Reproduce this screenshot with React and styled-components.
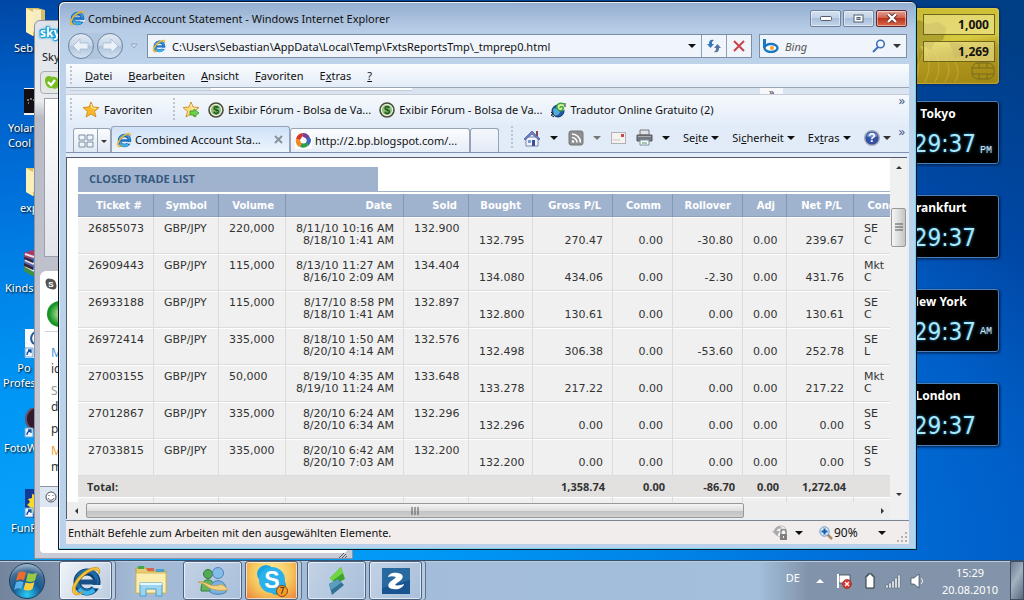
import React from "react";
import styled, { createGlobalStyle } from "styled-components";

const trades = [
    ["26855073", "220,000", "8/11/10 10:16 AM", "8/18/10 1:41 AM", "132.900", "132.795", "270.47", "0.00", "-30.80", "0.00", "239.67", "SE", "C"],
    ["26909443", "115,000", "8/13/10 11:27 AM", "8/16/10 2:09 AM", "134.404", "134.080", "434.06", "0.00", "-2.30", "0.00", "431.76", "Mkt", "C"],
    ["26933188", "115,000", "8/17/10 8:58 PM", "8/18/10 1:41 AM", "132.897", "132.800", "130.61", "0.00", "0.00", "0.00", "130.61", "SE", "C"],
    ["26972414", "335,000", "8/18/10 1:50 AM", "8/20/10 4:14 AM", "132.576", "132.498", "306.38", "0.00", "-53.60", "0.00", "252.78", "SE", "L"],
    ["27003155", "50,000", "8/19/10 4:35 AM", "8/19/10 11:24 AM", "133.648", "133.278", "217.22", "0.00", "0.00", "0.00", "217.22", "Mkt", "C"],
    ["27012867", "335,000", "8/20/10 6:24 AM", "8/20/10 6:34 AM", "132.296", "132.296", "0.00", "0.00", "0.00", "0.00", "0.00", "SE", "S"],
    ["27033815", "335,000", "8/20/10 6:42 AM", "8/20/10 7:03 AM", "132.200", "132.200", "0.00", "0.00", "0.00", "0.00", "0.00", "SE", "S"],
];

const columns = [
    ["Ticket #", 76],
    ["Symbol", 65],
    ["Volume", 67],
    ["Date", 118],
    ["Sold", 65],
    ["Bought", 64],
    ["Gross P/L", 80],
    ["Comm", 60],
    ["Rollover", 70],
    ["Adj", 44],
    ["Net P/L", 67],
    ["Cond", 54],
];

const clocks = [
    { city: "Tokyo", top: 101, half: "PM", low: true },
    { city: "Frankfurt", top: 195 },
    { city: "New York", top: 289, half: "AM" },
    { city: "London", top: 383 },
];

const shortcuts = [
    { x: 14, y: 8, kind: "folder", label: ["Seb"] },
    { x: 8, y: 88, kind: "photo", label: ["Yolan", "Cool"] },
    { x: 20, y: 168, kind: "folder", label: ["exp"] },
    { x: 5, y: 248, kind: "rar", label: ["Kinds"] },
    { x: 3, y: 328, kind: "paper", label: ["     Po", "Profes"] },
    { x: 4, y: 408, kind: "lens", label: ["FotoW"] },
    { x: 11, y: 488, kind: "sun", label: ["FunP"] },
];

/* ---------- icons ---------- */

function IeIcon({ size = 16, dark }) {
    return (
        <svg width={size} height={size} viewBox="0 0 32 32">
            <circle cx="17" cy="17" r="10" fill="none" stroke={dark ? "#0d3d6e" : "#0f55a8"} strokeWidth="7" />
            <circle cx="17" cy="16" r="10" fill="none" stroke={dark ? "#1c6aa6" : "#3a9be0"} strokeWidth="4" />
            <path d="M9 24a10 10 0 0 0 15 1" fill="none" stroke="#35b5ee" strokeWidth="4" />
            <path d="M10 17h17" stroke={dark ? "#174f86" : "#1c6fc4"} strokeWidth="5" />
            <path d="M20 20h12v4l-8-1z" fill="#dce8f4" />
            <path d="M4 29C-2 24 9 7 22 3c7-2 9 1 7 6 0-4-3-5-8-3C11 11 3 22 6 27c1 2 5 1 8-1-4 4-8 5-10 3z" fill="#f6c537" stroke="#c98d13" strokeWidth=".7" />
        </svg>
    );
}

function Arrow({ dir = "down", color = "#111" }) {
    const paths = {
        down: "M0 2h8L4 6z",
        up: "M0 6h8L4 2z",
    };
    return (
        <svg width="8" height="8" viewBox="0 0 8 8">
            <path d={paths[dir]} fill={color} />
        </svg>
    );
}

function SmallArrow({ dir }) {
    const paths = {
        down: "M1 3h6L4 6z",
        up: "M1 6h6L4 3z",
        left: "M6 1v6L3 4z",
        right: "M3 1v6l3-3z",
    };
    return (
        <svg width="8" height="8" viewBox="0 0 8 8">
            <path d={paths[dir]} fill="#333" />
        </svg>
    );
}

function NavArrow({ flip }) {
    return (
        <svg width="18" height="16" viewBox="0 0 18 16">
            <path
                d={flip ? "M17 8 10 1v4H2v6h8v4z" : "M1 8l7-7v4h8v6H8v4z"}
                fill="#eaf1f9" stroke="#a9bdd4" strokeWidth=".8"
            />
        </svg>
    );
}

function StarIcon({ add }) {
    return (
        <svg width="17" height="17" viewBox="0 0 17 17">
            <path d="M8 1l2 5 6 .5-4.500 4 1.500 5.500-5-3-5 3 1.500-5.500L0 6.500 6 6z" fill={add ? "#f9dc7c" : "#fbb829"} stroke="#c87f13" strokeWidth=".8" />
            <path d="M8 3l1 4 4 .5" fill="none" stroke="#fff2b0" />
            {add && <path d="M7 10h4V8l5 4-5 4v-2H7z" fill="#6fd04f" stroke="#2f9a26" strokeWidth=".8" />}
        </svg>
    );
}

function DollarIcon() {
    return (
        <svg width="16" height="16" viewBox="0 0 16 16">
            <circle cx="8" cy="8" r="7" fill="#eaf2da" stroke="#4b4a3c" strokeWidth="1.600" />
            <circle cx="8" cy="8" r="5" fill="#8fc077" />
            <text x="8" y="12" textAnchor="middle" fontSize="11" fontWeight="bold" fontFamily="Liberation Sans, sans-serif" fill="#175a1c">$</text>
        </svg>
    );
}

function GlobeIcon() {
    return (
        <svg width="16" height="16" viewBox="0 0 16 16">
            <circle cx="8" cy="9" r="6" fill="#1c5ea8" stroke="#12335e" />
            <path d="M3 7c3-2 4 0 7 3-1 3-4 4-6 3z" fill="#57a9dc" />
            <circle cx="11" cy="5" r="4" fill="#d9f0a8" />
            <path d="M14 2c-5-2-8 1-7 4s5 4 6 1-3-3-3-1" fill="none" stroke="#35a839" strokeWidth="1.500" />
            <path d="M1 10l2 2-2 1 3 2M15 1v4" stroke="#222" fill="none" />
        </svg>
    );
}

function PicasaIcon() {
    return (
        <svg width="17" height="17" viewBox="0 0 17 17">
            <rect width="17" height="17" fill="#fff" />
            <path d="M8 1a7.500 7.500 0 0 1 7 5l-3 2-5-4z" fill="#7b3f98" />
            <path d="M8 1 7 5 5 8 1 7a8 8 0 0 1 7-6z" fill="#d8352a" />
            <path d="M16 7a8 8 0 0 1-3 7l-2-5 2-4z" fill="#3d69c0" />
            <path d="M13 14a8 8 0 0 1-8 1l1-4 6-1z" fill="#2c9d49" />
            <path d="M4 15A8 8 0 0 1 1 7l4 1 2 4z" fill="#ef8b20" />
            <circle cx="8.500" cy="8.500" r="3" fill="#fff" />
        </svg>
    );
}

function HomeIcon() {
    return (
        <svg width="18" height="18" viewBox="0 0 18 18">
            <path d="M13 2h2v5h-2z" fill="#8b4b42" />
            <path d="M3 8h12v9H3z" fill="#f3f4fa" stroke="#7882b4" />
            <path d="M1 10l8-8 8 8-1 1-7-6-7 6z" fill="#6f80c8" stroke="#46549b" strokeWidth=".7" />
            <path d="M9 11h3v6H9z" fill="#3e4f9a" />
            <path d="M5 11h3v3H5z" fill="#7a98d8" />
        </svg>
    );
}

function FeedIcon() {
    return (
        <svg width="16" height="16" viewBox="0 0 16 16">
            <rect x="1" y="1" width="14" height="14" rx="2" fill="#8e8e8e" stroke="#777" />
            <circle cx="5" cy="11.500" r="1.300" fill="#fff" />
            <path d="M4 7.500a5 5 0 0 1 5 5M4 4a8.500 8.500 0 0 1 8.500 8.500" fill="none" stroke="#fff" strokeWidth="1.600" />
        </svg>
    );
}

function MailIcon() {
    return (
        <svg width="15" height="12" viewBox="0 0 15 12">
            <rect x=".5" y=".5" width="14" height="11" fill="#f5f3f2" stroke="#b4b0b0" />
            <path d="M2 8h7" stroke="#c9c5c5" />
            <path d="M10 2h3v3h-3z" fill="#c9474d" />
        </svg>
    );
}

function PrinterIcon() {
    return (
        <svg width="17" height="17" viewBox="0 0 17 17">
            <path d="M4 1h9v5H4z" fill="#dfe3e8" stroke="#777" />
            <path d="M1 6h15v6H1z" fill="#74787e" stroke="#56595e" />
            <path d="M2 7h13v1H2z" fill="#a9adb2" />
            <path d="M4 11h9v5H4z" fill="#f8fbff" stroke="#7790a4" />
            <path d="M6 14h5" stroke="#49a04c" />
        </svg>
    );
}

function HelpIcon() {
    return (
        <svg width="16" height="16" viewBox="0 0 16 16">
            <circle cx="8" cy="8" r="7.300" fill="#3450a4" stroke="#a3a9b5" strokeWidth="1.400" />
            <path d="M2.500 6a6 6 0 0 1 11 0c-3 2-8 2-11 0z" fill="#6f8ed6" />
            <text x="8" y="12" textAnchor="middle" fontSize="12" fontWeight="bold" fontFamily="Liberation Sans, sans-serif" fill="#fff">?</text>
        </svg>
    );
}

function RefreshIcon() {
    return (
        <svg width="16" height="16" viewBox="0 0 16 16">
            <path d="M1 6l3.500 4L8 6H6V4l2-2C4 1 3 3 3 6z" fill="#3577b8" />
            <path d="M15 10l-3.500-4L8 10h2v2l-2 2c4 1 5-1 5-4z" fill="#55779e" />
        </svg>
    );
}

function StopIcon() {
    return (
        <svg width="12" height="12" viewBox="0 0 12 12">
            <path d="M1 1l10 10M11 1L1 11" stroke="#c9414a" strokeWidth="2" />
        </svg>
    );
}

function BingIcon() {
    return (
        <svg width="16" height="14" viewBox="0 0 16 14">
            <path d="M1.500 0v9" stroke="#1b77bf" strokeWidth="3" />
            <ellipse cx="8" cy="9" rx="6.500" ry="4" fill="#fff" stroke="#1b77bf" strokeWidth="2.400" />
            <circle cx="9" cy="9" r="2" fill="#f6a11c" />
        </svg>
    );
}

function SearchIcon() {
    return (
        <svg width="14" height="14" viewBox="0 0 14 14">
            <circle cx="8.500" cy="5" r="3.800" fill="#f3f9ff" stroke="#3b72b5" strokeWidth="1.600" />
            <path d="M6 8l-5 5" stroke="#3b72b5" strokeWidth="2" />
        </svg>
    );
}

function ZoomIcon() {
    return (
        <svg width="14" height="14" viewBox="0 0 14 14">
            <path d="M8 8l5 5" stroke="#a78764" strokeWidth="2.500" />
            <circle cx="5.500" cy="5.500" r="4.700" fill="#d8eafb" stroke="#6b94bd" />
            <path d="M5.500 2.500v6M2.500 5.500h6" stroke="#185ea9" strokeWidth="2" />
        </svg>
    );
}

function PrivacyIcon() {
    return (
        <svg width="17" height="15" viewBox="0 0 17 15">
            <circle cx="9" cy="6.500" r="5.500" fill="#f4f4f4" stroke="#bbb" />
            <path d="M9 2v5" stroke="#999" />
            <path d="M3 7a6 6 0 0 1 5-5" fill="none" stroke="#aaa" strokeWidth="2.500" />
            <path d="M0 6l5 5 3-5z" fill="#aaa" />
            <path d="M9 9V7a2.500 2.500 0 0 1 5 0v2" fill="none" stroke="#888" strokeWidth="1.300" />
            <path d="M8 9h7v6H8z" fill="#7f7f7f" />
            <path d="M11 11h1v2h-1z" fill="#eee" />
        </svg>
    );
}

function ShortcutIcon({ kind }) {
    return (
        <svg width="28" height="32" viewBox="0 0 28 32">
            {kind === "folder" && (
                <>
                    <path d="M2 0l8-1 11 3v20L9 28 2 24z" fill="#d9bd66" />
                    <path d="M9 1l8 1v18l-8 4z" fill="#f5ecc4" />
                    <path d="M2 0l7 4v24l-7-4z" fill="#fbf0b5" />
                </>
            )}
            {kind === "photo" && (
                <>
                    <path d="M0 0h28v27H0z" fill="#f4f4f4" />
                    <path d="M0 1h28v24H0z" fill="#130e14" />
                    <path d="M3 12h2M6 11h2M4 15h1M9 12h2" stroke="#ddd" fill="none" />
                </>
            )}
            {kind === "rar" && (
                <>
                    <path d="M0 5l8-3 18 1v8H8L0 9z" fill="#a83a68" />
                    <path d="M0 11l8 3h18v6H8l-8-4z" fill="#5963b0" />
                    <path d="M0 18l8 4h18v6H8l-8-5z" fill="#3f8f46" />
                    <path d="M1 6l9 3M1 12l9 4M1 18l9 5" stroke="#e9e4ea" strokeWidth="2" />
                    <path d="M0 9l9 3v3l-9-4zM0 15l9 4v3l-9-4z" fill="#3a2536" />
                </>
            )}
            {kind === "paper" && (
                <>
                    <path d="M1 1h27v29H1z" fill="#f7fbff" />
                    <path d="M11 4c-5 3-5 9-1 12" fill="none" stroke="#285d91" strokeWidth="2" />
                </>
            )}
            {kind === "lens" && <circle cx="14" cy="11" r="12" fill="#32192b" stroke="#67526a" strokeWidth="2" />}
            {kind === "sun" && (
                <>
                    <path d="M1 1h27v29H1z" fill="#123b97" />
                    <path d="M15 3l-3 1-1 3-3-1v4l-4 1 2 3-3 3 3 2-1 3 4 1 1 3 5-1z" fill="#f8d82b" />
                </>
            )}
            {(kind === "paper" || kind === "lens" || kind === "sun") && (
                <>
                    <path d="M1 20h8v9H1z" fill="#eaf5ff" stroke="#6da4cf" />
                    <path d="M3 27c0-3 1-4 4-4M4 22h3v3" stroke="#17509e" strokeWidth="1.300" fill="none" />
                </>
            )}
        </svg>
    );
}

function StartOrb() {
    return (
        <svg width="38" height="38" viewBox="0 0 38 38">
            <defs>
                <radialGradient id="orb" cx="50%" cy="90%" r="90%">
                    <stop offset="0" stopColor="#29cdf5" />
                    <stop offset=".45" stopColor="#165a94" />
                    <stop offset=".75" stopColor="#3f6d95" />
                    <stop offset="1" stopColor="#a9bed0" />
                </radialGradient>
            </defs>
            <circle cx="19" cy="19" r="17.500" fill="url(#orb)" stroke="#213e5c" />
            <path d="M10 11c3-2 6-2 8-.5l-2 8c-2-1.500-5-1.500-8 .5z" fill="#ea6d2d" />
            <path d="M20 11c2 1 6 1.500 9-.5l-2 8c-3 2-6 1.500-9 .5z" fill="#9aca41" />
            <path d="M8 20.500c3-2 5-1.500 7.500-.5l-2 7c-2-1-5-1-7.500 1z" fill="#5ab1ea" />
            <path d="M17.500 20.500c3 1 6 1 9-.5l-2 7c-3 2-6 2-9 .5z" fill="#fbce3d" />
        </svg>
    );
}

function ExplorerIcon() {
    return (
        <svg width="34" height="32" viewBox="0 0 34 32">
            <path d="M2 3h10l2 3h18v22H2z" fill="#e8cc70" stroke="#ba9b45" />
            <path d="M4 1h6v3H4z" fill="#41a64d" />
            <path d="M13 3h7v3h-7z" fill="#d7654b" />
            <path d="M22 4h8v3h-8z" fill="#4aa0cf" />
            <path d="M2 8h30v20H2z" fill="#fbeeb0" stroke="#d8bc62" />
            <path d="M6 31V18h22v13h-6v-7H12v7z" fill="#9bd5f2" stroke="#4c9cc9" />
            <path d="M6 19h22" stroke="#e3f7ff" strokeWidth="2" />
        </svg>
    );
}

function MessengerIcon() {
    return (
        <svg width="32" height="30" viewBox="0 0 32 30">
            <circle cx="11" cy="8" r="4.500" fill="#54a955" stroke="#2f7d38" />
            <path d="M4 25c-1-15 15-15 14 0z" fill="#66b45a" stroke="#31803b" />
            <circle cx="21" cy="7" r="5.500" fill="#86bde8" stroke="#4c84bd" />
            <path d="M13 26c-2-15 18-15 16 0-4 3-12 3-16 0z" fill="#79b2df" stroke="#477fb6" />
            <path d="M1 16c7-2 12 6 21 3 4-1 6 1 9 5-9 1-16 0-20-3-4-3-6-4-10-5z" fill="#f2d184" stroke="#c79d46" strokeWidth=".8" />
        </svg>
    );
}

function SkypeIcon() {
    return (
        <svg width="34" height="34" viewBox="0 0 34 34">
            <circle cx="11" cy="10" r="9" fill="#19a5e3" />
            <circle cx="22" cy="22" r="9" fill="#19a5e3" />
            <circle cx="17" cy="16" r="13" fill="#2ab1ea" />
            <text x="17" y="24" textAnchor="middle" fontSize="23" fontWeight="bold" fontFamily="Liberation Sans, sans-serif" fill="#fff">S</text>
            <circle cx="27" cy="27" r="5.500" fill="#f69c28" stroke="#8e470e" />
            <text x="27" y="30" textAnchor="middle" fontSize="8" fontFamily="DejaVu Sans, sans-serif" fill="#35200a">7</text>
        </svg>
    );
}

function RibbonIcon() {
    return (
        <svg width="18" height="32" viewBox="0 0 18 32">
            <path d="M2 13 13 2l4 12-9 5z" fill="#3ea52c" />
            <path d="M2 13 13 2l2 6-11 8z" fill="#72d643" />
            <path d="M1 19l9-5 6 6L4 30z" fill="#2f7296" />
            <path d="M1 19l9-5 3 4-10 7z" fill="#5b9dbd" />
        </svg>
    );
}

function ZIcon() {
    return (
        <svg width="28" height="26" viewBox="0 0 28 26">
            <path d="M0 0h28v26H0z" fill="#1a5490" />
            <path d="M0 0h28v12L0 20z" fill="#28699f" />
            <path d="M6 9c1-4 6-5 10-4 5 1 6 4 3 7-2 2-5 3-6 5 2 1 6 0 9-1-1 4-6 6-11 5-5 0-6-4-3-7 2-2 5-3 6-5-3-1-5-1-8 0z" fill="#fff" />
        </svg>
    );
}

function TrayIcons() {
    return (
        <svg width="88" height="18" viewBox="0 0 88 18">
            <path d="M2 2v14M3 3h11v8H3z" fill="#fff" stroke="#39434f" strokeWidth=".8" />
            <path d="M1 2h2v14H1z" fill="#fff" />
            <circle cx="11" cy="12" r="4.500" fill="#d9372e" stroke="#8e241e" strokeWidth=".6" />
            <path d="M9 10l4 4M13 10l-4 4" stroke="#fff" strokeWidth="1.300" />
            <path d="M32 2h4v2h2v12h-8V4h2z" fill="#fff" stroke="#272f39" />
            <path d="M50 13h2v3h-2zM53 11h2v5h-2zM56 9h2v7h-2zM59 6h2v10h-2zM62 3h2v13h-2z" fill="#fff" stroke="#3b4859" strokeWidth=".4" />
            <path d="M75 6h3l5-4v14l-5-4h-3z" fill="#fff" stroke="#39434f" strokeWidth=".7" />
            <path d="M85 6c2 2 2 4 0 6" fill="none" stroke="#fff" />
        </svg>
    );
}

/* ---------- page ---------- */

function TradeTable() {
    return (
        <Table>
            <colgroup>
                {columns.map(([name, width]) => (
                    <col key={name} width={width} />
                ))}
            </colgroup>
            <thead>
                <tr>
                    {columns.map(([name]) => (
                        <HeadCell key={name} scope="col">{name}</HeadCell>
                    ))}
                </tr>
            </thead>
            <tbody>
                {trades.map(([ticket, volume, opened, closed, sold, bought, gross, comm, roll, adj, net, c1, c2]) => (
                    <tr key={ticket}>
                        <Cell $left>{ticket}</Cell>
                        <Cell $left>GBP/JPY</Cell>
                        <Cell $left>{volume}</Cell>
                        <Cell>{opened}<br />{closed}</Cell>
                        <Cell>{sold}</Cell>
                        <Cell $low>{bought}</Cell>
                        <Cell $low>{gross}</Cell>
                        <Cell $low>{comm}</Cell>
                        <Cell $low>{roll}</Cell>
                        <Cell $low>{adj}</Cell>
                        <Cell $low>{net}</Cell>
                        <Cell $left>{c1}<br />{c2}</Cell>
                    </tr>
                ))}
            </tbody>
            <tfoot>
                <tr>
                    <TotalCell $left colSpan={6}>Total:</TotalCell>
                    <TotalCell>1,358.74</TotalCell>
                    <TotalCell>0.00</TotalCell>
                    <TotalCell>-86.70</TotalCell>
                    <TotalCell>0.00</TotalCell>
                    <TotalCell>1,272.04</TotalCell>
                    <TotalCell />
                </tr>
                <tr>
                    {columns.map(([name]) => (
                        <Cell key={name} />
                    ))}
                </tr>
            </tfoot>
        </Table>
    );
}

function Browser() {
    return (
        <BrowserWindow>
            <TitleBar>
                <IeIcon />
                <Title>Combined Account Statement - Windows Internet Explorer</Title>
                <WindowButton aria-label="Minimieren">
                    <svg width="12" height="5"><rect x=".5" y=".5" width="11" height="4" rx="1" fill="#fff" stroke="#535d6b" /></svg>
                </WindowButton>
                <WindowButton aria-label="Maximieren">
                    <svg width="11" height="9"><rect x="1" y="1" width="9" height="7" fill="#fff" stroke="#535d6b" /><rect x="4" y="3.500" width="3" height="2" fill="#9fb6d0" stroke="#535d6b" /></svg>
                </WindowButton>
                <WindowButton $close aria-label="Schließen">
                    <svg width="12" height="10" viewBox="0 0 12 10"><path d="M2 1l8 8M10 1L2 9" stroke="#5b2a2a" strokeWidth="4" /><path d="M2 1l8 8M10 1L2 9" stroke="#fff" strokeWidth="2.400" /></svg>
                </WindowButton>
            </TitleBar>

            <NavRow>
                <RoundButtons>
                    <RoundButton aria-label="Zurück"><NavArrow /></RoundButton>
                    <RoundButton aria-label="Vorwärts"><NavArrow flip /></RoundButton>
                </RoundButtons>
                <svg width="8" height="6" viewBox="0 0 8 6"><path d="M1 1h6L4 5z" fill="#dce8f5" stroke="#8fa5c0" /></svg>
                <AddressBox>
                    <IeIcon size={14} />
                    <AddressInput aria-label="Adresse" defaultValue="C:\Users\Sebastian\AppData\Local\Temp\FxtsReportsTmp\_tmprep0.html" />
                    <FieldButton $narrow aria-label="Verlauf"><Arrow /></FieldButton>
                    <FieldButton $line aria-label="Aktualisieren"><RefreshIcon /></FieldButton>
                    <FieldButton $line aria-label="Stopp"><StopIcon /></FieldButton>
                </AddressBox>
                <SearchBox>
                    <BingIcon />
                    <SearchInput aria-label="Suche" placeholder="Bing" />
                    <FieldButton $narrow aria-label="Suchen"><SearchIcon /></FieldButton>
                    <FieldButton $narrow aria-label="Suchoptionen"><Arrow color="#333" /></FieldButton>
                </SearchBox>
            </NavRow>

            <Chrome>
                <MenuBar>
                    <Grip />
                    <MenuButton><u>D</u>atei</MenuButton>
                    <MenuButton><u>B</u>earbeiten</MenuButton>
                    <MenuButton><u>A</u>nsicht</MenuButton>
                    <MenuButton><u>F</u>avoriten</MenuButton>
                    <MenuButton>E<u>x</u>tras</MenuButton>
                    <MenuButton><u>?</u></MenuButton>
                </MenuBar>
                <Sliver>
                    <SliverPatch />
                    <SliverGap />
                    <SliverChevron>»</SliverChevron>
                </Sliver>
                <FavoritesBar>
                    <Grip />
                    <FavoritesButton><StarIcon />Favoriten</FavoritesButton>
                    <Grip />
                    <LinkList>
                        <ToolButton aria-label="Hinzufügen"><StarIcon add /></ToolButton>
                        <FavoriteLink href="#forum"><DollarIcon />Exibir Fórum - Bolsa de Va...</FavoriteLink>
                        <FavoriteLink href="#forum-2"><DollarIcon />Exibir Fórum - Bolsa de Va...</FavoriteLink>
                        <FavoriteLink href="#tradutor"><GlobeIcon />Tradutor Online Gratuito (2)</FavoriteLink>
                    </LinkList>
                    <More>»</More>
                </FavoritesBar>
                <TabBar>
                    <QuickTabs>
                        <ToolButton aria-label="Schnellregister">
                            <svg width="16" height="14" viewBox="0 0 16 14"><path d="M1 1h6v5H1zM9 1h6v5H9zM1 8h6v5H1zM9 8h6v5H9z" fill="#eef4fb" stroke="#7e8ca3" /></svg>
                        </ToolButton>
                        <QuickArrow aria-label="Registerliste"><SmallArrow dir="down" /></QuickArrow>
                    </QuickTabs>
                    <Tab $active>
                        <IeIcon />
                        <TabText>Combined Account Sta...</TabText>
                        <svg width="9" height="9" viewBox="0 0 9 9"><path d="M1 1l7 7M8 1L1 8" stroke="#8b929c" strokeWidth="2" /></svg>
                    </Tab>
                    <Tab>
                        <PicasaIcon />
                        <TabText>http://2.bp.blogspot.com/...</TabText>
                    </Tab>
                    <NewTab aria-label="Neue Registerkarte" />
                    <CommandBar>
                        <Grip />
                        <ToolButton aria-label="Startseite"><HomeIcon /><Arrow /></ToolButton>
                        <ToolButton aria-label="Feeds"><FeedIcon /><Arrow color="#777" /></ToolButton>
                        <ToolButton aria-label="E-Mail"><MailIcon /></ToolButton>
                        <ToolButton aria-label="Drucken"><PrinterIcon /><Arrow /></ToolButton>
                        <CommandButton><span>Se<u>i</u>te</span><Arrow /></CommandButton>
                        <CommandButton><span>Si<u>c</u>herheit</span><Arrow /></CommandButton>
                        <CommandButton><span>Ex<u>t</u>ras</span><Arrow /></CommandButton>
                        <CommandButton aria-label="Hilfe"><HelpIcon /><Arrow color="#333" /></CommandButton>
                    </CommandBar>
                    <More>»</More>
                </TabBar>

                <PageArea>
                    <Page>
                        <SectionHead>
                            <SectionTitle>CLOSED TRADE LIST</SectionTitle>
                        </SectionHead>
                        <TradeTable />
                    </Page>
                    <VScroll>
                        <ScrollButton aria-label="Nach oben"><SmallArrow dir="up" /></ScrollButton>
                        <VThumb><svg width="8" height="9"><path d="M0 1h8M0 4h8M0 7h8" stroke="#555" /></svg></VThumb>
                        <ScrollButton aria-label="Nach unten"><SmallArrow dir="down" /></ScrollButton>
                    </VScroll>
                    <HScroll>
                        <ScrollButton aria-label="Nach links"><SmallArrow dir="left" /></ScrollButton>
                        <HThumb><svg width="9" height="8"><path d="M1 0v8M4 0v8M7 0v8" stroke="#555" /></svg></HThumb>
                        <ScrollButton aria-label="Nach rechts"><SmallArrow dir="right" /></ScrollButton>
                    </HScroll>
                </PageArea>

                <StatusBar>
                    <StatusText>Enthält Befehle zum Arbeiten mit den ausgewählten Elemente.</StatusText>
                    <StatusButton aria-label="Datenschutz"><PrivacyIcon /><Arrow /></StatusButton>
                    <StatusButton $wide><ZoomIcon /><span>90%</span><Arrow /></StatusButton>
                    <svg width="10" height="10" viewBox="0 0 10 10"><path d="M8 0h2v2H8zM8 4h2v2H8zM4 4h2v2H4zM8 8h2v2H8zM4 8h2v2H4zM0 8h2v2H0z" fill="#b5b1ae" /></svg>
                </StatusBar>
            </Chrome>
        </BrowserWindow>
    );
}

function Messenger() {
    return (
        <MessengerWindow>
            <MessengerLogo>sky</MessengerLogo>
            <MessengerMenu>Sky</MessengerMenu>
            <MessengerTools>
                <svg width="16" height="16" viewBox="0 0 16 16"><path d="M1 5c0-4 4-5 7-3 5-1 8 3 6 6 2 5-3 7-6 5-4 1-7-3-7-8z" fill="#79bd25" /><path d="M4 7l3 3 4-5" fill="none" stroke="#fff" strokeWidth="2.200" /></svg>
            </MessengerTools>
            <MessengerPane />
            <Chat>
                <svg width="12" height="12" viewBox="0 0 12 12"><circle cx="4" cy="4" r="3.500" fill="#555" /><circle cx="8" cy="8" r="3.500" fill="#555" /><circle cx="6" cy="6" r="5" fill="#555" /><text x="6" y="9" textAnchor="middle" fontSize="8" fontWeight="bold" fontFamily="Liberation Sans, sans-serif" fill="#fff">S</text></svg>
                <CallIcon />
                <ChatLog>
                    <ChatLine $top $color="#4c93d8">M</ChatLine>
                    <ChatLine>id</ChatLine>
                    <ChatLine $top $color="#999">S</ChatLine>
                    <ChatLine>d</ChatLine>
                    <ChatLine $top>p</ChatLine>
                    <ChatLine $top $color="#efa13a">M</ChatLine>
                    <ChatLine>m</ChatLine>
                </ChatLog>
            </Chat>
            <SmileyBar>
                <svg width="12" height="12" viewBox="0 0 12 12"><circle cx="6" cy="6" r="5" fill="#fff" stroke="#4d5259" /><path d="M4 4v1M8 4v1M3 7c1 3 5 3 6 0" fill="none" stroke="#4d5259" /></svg>
            </SmileyBar>
            <MessageBox aria-label="Nachricht" />
            <ResizeCorner>
                <svg width="8" height="5" viewBox="0 0 8 5"><path d="M0 5l5-5M3 5l4-4M6 5l2-2" stroke="#555" /></svg>
            </ResizeCorner>
        </MessengerWindow>
    );
}

export default function App() {
    return (
        <Screen>
            <GlobalStyle />
            <Desktop>
                {shortcuts.map((item) => (
                    <Shortcut key={item.y} $x={item.x} $y={item.y}>
                        <ShortcutImage $x={item.x}><ShortcutIcon kind={item.kind} /></ShortcutImage>
                        {item.label.map((line) => (
                            <span key={line}>{line}</span>
                        ))}
                    </Shortcut>
                ))}

                <CurrencyGadget>
                    <svg width="100" height="76" viewBox="0 0 100 76">
                        <path d="M2 14l8 4 10-6 8 4 12-2 8 6-4 12-8 2-4 8-8-4-7 2-4-8-8 2zM12 38l8-2 4 8-6 14-4-6zM50 34l14 2 2 12-10 2z" fill="#7d6f1c" opacity=".4" />
                        <path d="M6 34q8 20 0 40M16 34q8 20 0 40M26 40q8 18 0 34M36 44q8 16 0 30M46 50q8 12 0 24M56 54q6 10 0 20" fill="none" stroke="#d6c243" opacity=".5" />
                        <rect x="73" y="55" width="22" height="16" rx="6" fill="none" stroke="#756c1c" />
                        <path d="M73 60h22M73 66h22M80 55v5M88 55v5M80 66v5M88 66v5" stroke="#756c1c" />
                    </svg>
                    <CurrencyValues>
                        <CurrencyInput aria-label="Betrag" defaultValue="1,000" />
                        <CurrencyInput aria-label="Ergebnis" defaultValue="1,269" />
                    </CurrencyValues>
                </CurrencyGadget>
                {clocks.map((clock) => (
                    <Clock key={clock.city} $top={clock.top}>
                        <City>{clock.city}</City>
                        <Time>
                            29:37
                            <Half $low={clock.low}>{clock.half}</Half>
                        </Time>
                    </Clock>
                ))}

                <Messenger />
                <Browser />
            </Desktop>

            <Taskbar>
                <StartButton aria-label="Start"><StartOrb /></StartButton>
                <TaskButton $stack $lit aria-label="Internet Explorer"><IeIcon size={32} dark /></TaskButton>
                <TaskButton $plain aria-label="Explorer"><ExplorerIcon /></TaskButton>
                <TaskButton aria-label="Messenger"><MessengerIcon /></TaskButton>
                <TaskButton $alert $stack aria-label="Skype"><SkypeIcon /></TaskButton>
                <TaskButton aria-label="Trading Station"><RibbonIcon /></TaskButton>
                <TaskButton $stack aria-label="Zattoo"><ZIcon /></TaskButton>
                <Tray>
                    <Language>DE</Language>
                    <Arrow dir="up" color="#fff" />
                    <TrayIcons />
                    <DateTime>
                        <span>15:29</span>
                        <span>20.08.2010</span>
                    </DateTime>
                </Tray>
                <ShowDesktop aria-label="Desktop anzeigen" />
            </Taskbar>
        </Screen>
    );
}

const GlobalStyle = createGlobalStyle`
    * {
        box-sizing: border-box;
    }

    body {
        margin: 0;
        overflow: hidden;
        font-family: "Noto Sans", "Open Sans", sans-serif;
        font-size: 11px;
        color: #111;
    }

    button, input, textarea {
        font: inherit;
        color: inherit;
        border: none;
        padding: 0;
        margin: 0;
        background: none;
        outline: none;
    }

    svg {
        flex: none;
        display: block;
    }
`;

const Screen = styled.div`
    display: flex;
    flex-direction: column;
    height: 100vh;
`;

const Desktop = styled.main`
    position: relative;
    flex: 1;
    overflow: hidden;
    background: radial-gradient(ellipse 130% 125% at 12% 100%, #0ca6fb, #0096f5 25%, #0082e6 42%, #006ed8 55%, #005fc8 68%, #0048a6 80%, #003e86);
`;

const Shortcut = styled.div`
    position: absolute;
    left: ${(props) => props.$x}px;
    top: ${(props) => props.$y}px;
    display: flex;
    flex-direction: column;
    line-height: 15px;
    white-space: pre;
    color: #fff;
    text-shadow: 1px 1px 2px #000;
`;

const ShortcutImage = styled.div`
    height: 32px;
    padding-left: ${(props) => 24 - props.$x}px;
`;

const CurrencyGadget = styled.section`
    position: absolute;
    right: 25px;
    top: 8px;
    width: 100px;
    height: 76px;
    border-radius: 4px;
    background: linear-gradient(170deg, #c9b931, #d6c93f 45%, #b29a1f 60%, #a08513);
    box-shadow: 0 0 3px #001c44, inset 0 0 2px #f3e874;
`;

const CurrencyValues = styled.div`
    position: absolute;
    top: 6px;
    right: 4px;
    display: flex;
    flex-direction: column;
    gap: 6px;
`;

const CurrencyInput = styled.input`
    width: 72px;
    height: 21px;
    padding-right: 5px;
    border: 1px solid #6f641c;
    background: rgba(240, 230, 150, 0.6);
    font-size: 12px;
    font-weight: bold;
    text-align: right;
`;

const Clock = styled.section`
    position: absolute;
    right: 25px;
    top: ${(props) => props.$top}px;
    width: 122px;
    height: 63px;
    padding-top: 3px;
    border: 1px solid #4a80b8;
    border-radius: 3px;
    background: #000;
    box-shadow: 1px 1px 3px #001c44;
    color: #fff;
`;

const City = styled.h2`
    margin: 0;
    font-size: 12px;
    line-height: 18px;
    text-align: center;
`;

const Time = styled.div`
    display: flex;
    align-items: center;
    justify-content: flex-end;
    padding-top: 2px;
    padding-right: 4px;
    font-family: "DejaVu Sans Condensed", "DejaVu Sans", sans-serif;
    font-size: 24px;
    line-height: 38px;
    color: #a9e8fb;
    text-shadow: 0 0 3px #2389c4;
`;

const Half = styled.small`
    align-self: ${(props) => (props.$low ? "flex-end" : "center")};
    width: 18px;
    padding-left: 4px;
    padding-bottom: ${(props) => (props.$low ? 6 : 0)}px;
    font-family: "Liberation Mono", monospace;
    font-size: 10px;
    line-height: 12px;
    color: #d8e4ea;
`;

const MessengerWindow = styled.section`
    position: absolute;
    left: 34px;
    top: 20px;
    bottom: 1px;
    width: 319px;
    display: flex;
    flex-direction: column;
    padding: 0 5px;
    border: 1px solid #8c939e;
    border-radius: 6px 6px 0 0;
    background: linear-gradient(#dfe3e9, #e8eaee 15%, #b9bcc6 18%, #c9ccd6);
`;

const MessengerLogo = styled.div`
    height: 26px;
    font-weight: bold;
    font-size: 12px;
    line-height: 24px;
    color: #fff;
    text-shadow: 0 0 3px #0a9ad8, 1px 1px 1px #0a9ad8, -1px -1px 1px #0a9ad8, 1px -1px 2px #0a9ad8, -1px 1px 2px #0a9ad8;
`;

const MessengerMenu = styled.div`
    height: 24px;
    padding-left: 2px;
    line-height: 20px;
`;

const MessengerTools = styled.div`
    height: 23px;
    padding: 3px;
    border: 1px solid #a9adb5;
    border-radius: 4px;
    background: #e3e6e3;
`;

const MessengerPane = styled.div`
    height: 159px;
    margin: 4px 0 14px 4px;
    background: linear-gradient(#fff, #e2e4ea);
    border: 1px solid #9da0aa;
`;

const Chat = styled.div`
    flex: 1;
    padding: 7px 5px 0;
    border-radius: 6px 6px 0 0;
    background: #fff;
`;

const CallIcon = styled.div`
    width: 26px;
    height: 26px;
    margin: 11px 0 4px 2px;
    border-radius: 50%;
    background: radial-gradient(#8ccf7d 20%, #169426 60%);
`;

const ChatLog = styled.div`
    padding: 7px 0 0 6px;
    border-top: 1px solid #cfd2d8;
`;

const ChatLine = styled.p`
    margin: ${(props) => (props.$top ? 6 : 0)}px 0 0;
    font-size: 12px;
    line-height: 16px;
    color: ${(props) => props.$color || "#333"};
`;

const SmileyBar = styled.div`
    height: 21px;
    padding: 4px 5px;
    border-top: 1px solid #8d94a0;
    background: #dde6f3;
`;

const MessageBox = styled.textarea`
    height: 46px;
    resize: none;
    border-radius: 0 0 4px 4px;
    background: #fff;
`;

const ResizeCorner = styled.div`
    display: flex;
    justify-content: flex-end;
    height: 5px;
`;

const BrowserWindow = styled.section`
    position: absolute;
    left: 58px;
    right: 107px;
    top: 1px;
    bottom: 10px;
    display: flex;
    flex-direction: column;
    padding: 0 7px 5px;
    border: 1px solid #0d1521;
    border-radius: 6px 6px 0 0;
    background: linear-gradient(#93add0, #b7cde6 28px, #bdd3ea 60px, #b9d1ea);
    box-shadow: inset -1px -1px 0 #72d4f0, inset 1px 1px 0 #e4eefa;
`;

const TitleBar = styled.header`
    display: flex;
    align-items: center;
    gap: 2px;
    height: 32px;
    padding-left: 3px;
`;

const Title = styled.h1`
    flex: 1;
    margin: 0 0 0 1px;
    font-size: 11px;
    font-weight: normal;
    white-space: nowrap;
`;

const WindowButton = styled.button`
    display: flex;
    align-items: center;
    justify-content: center;
    width: 31px;
    height: 17px;
    margin-right: ${(props) => (props.$close ? 2 : 0)}px;
    border: 1px solid ${(props) => (props.$close ? "#5f2730" : "#71839c")};
    border-radius: 2px;
    background: ${(props) => (props.$close
        ? "linear-gradient(#e3a394, #d0614c 45%, #bd331e 50%, #d5674a)"
        : "linear-gradient(#d4e1f0, #c2d3e7 45%, #a9bfda 50%, #c2d5ea)")};
    box-shadow: inset 0 0 0 1px rgba(255, 255, 255, 0.45);
`;

const NavRow = styled.div`
    display: flex;
    align-items: center;
    gap: 7px;
    height: 30px;
    padding: 0 2px 6px;
`;

const RoundButtons = styled.div`
    display: flex;
    gap: 3px;
    border-radius: 14px;
    background: #b0c6df;
`;

const RoundButton = styled.button`
    display: flex;
    align-items: center;
    justify-content: center;
    width: 26px;
    height: 26px;
    border: 1px solid #71869f;
    border-radius: 50%;
    background: linear-gradient(#e1eaf4, #c4d4e7 50%, #adc3dc 50%, #d3e2f1);
`;

const AddressBox = styled.div`
    flex: 1;
    display: flex;
    align-items: center;
    height: 24px;
    margin-left: 2px;
    padding-left: 4px;
    border: 1px solid #7b8ea8;
    background: #f0f5fc;
`;

const AddressInput = styled.input`
    flex: 1;
    min-width: 0;
    padding-left: 6px;
`;

const FieldButton = styled.button`
    display: flex;
    align-items: center;
    justify-content: center;
    width: ${(props) => (props.$narrow ? 18 : 25)}px;
    height: 100%;
    border-left: ${(props) => (props.$line ? "1px solid #8d9db3" : "none")};
`;

const SearchBox = styled.div`
    display: flex;
    align-items: center;
    width: 148px;
    height: 24px;
    padding-left: 3px;
    border: 1px solid #7b8ea8;
    background: #f0f5fc;
`;

const SearchInput = styled.input`
    flex: 1;
    min-width: 0;
    padding-left: 6px;

    &::placeholder {
        color: #555;
        font-style: italic;
        opacity: 1;
    }
`;

const Chrome = styled.div`
    flex: 1;
    min-height: 0;
    display: flex;
    flex-direction: column;
    background: #e4edf8;
`;

const Grip = styled.span`
    flex: none;
    width: 2px;
    height: 24px;
    background: repeating-linear-gradient(#bcc4d0 0 2px, transparent 2px 4px);
`;

const MenuBar = styled.nav`
    display: flex;
    align-items: center;
    gap: 16px;
    height: 24px;
    padding-left: 4px;
    border-bottom: 1px solid #9aa5b5;
    background: linear-gradient(#fafcfe, #e3ecf7);

    ${Grip} {
        height: 20px;
        margin-right: -3px;
    }
`;

const MenuButton = styled.button`
    line-height: 20px;
`;

const Sliver = styled.div`
    display: flex;
    height: 7px;
    padding-left: 4px;
    overflow: hidden;
    background: #dae4f1;
    border-bottom: 1px solid #c6ccd5;
`;

const SliverPatch = styled.div`
    flex: 0 1 342px;
    height: 3px;
    background: linear-gradient(90deg, #dde7f4 141px, #fff 141px);
    border-bottom: 1px solid #c4ccd8;
`;

const SliverGap = styled.div`
    flex: 1;
`;

const SliverChevron = styled.span`
    width: 23px;
    margin-right: 126px;
    background: #f6f8fb;
    color: #444;
    line-height: 8px;
    text-align: center;
`;

const FavoritesBar = styled.nav`
    display: flex;
    align-items: center;
    height: 31px;
    padding: 0 4px 2px;
    background: linear-gradient(#f5f9fd, #e2ecf8);
`;

const FavoritesButton = styled.button`
    display: flex;
    align-items: center;
    gap: 4px;
    width: 101px;
    padding-left: 11px;
`;

const LinkList = styled.div`
    flex: 1;
    display: flex;
    align-items: center;
    gap: 8px;
    padding-left: 8px;
`;

const FavoriteLink = styled.a`
    display: flex;
    align-items: center;
    gap: 4px;
    color: inherit;
    text-decoration: none;
    white-space: nowrap;
`;

const More = styled.span`
    align-self: flex-start;
    color: #4d5d85;
    font-size: 13px;
    line-height: 10px;
`;

const TabBar = styled.div`
    display: flex;
    align-items: flex-end;
    height: 27px;
    padding: 0 4px 0 7px;
    border-bottom: 1px solid #7f93b0;
    background: #e2ecf8;
`;

const ToolButton = styled.button`
    display: flex;
    align-items: center;
    gap: 9px;
`;

const QuickTabs = styled.div`
    flex: none;
    display: flex;
    height: 24px;
    width: 38px;
    padding-left: 4px;
    border: 1px solid #97a3b5;
    border-bottom: none;
    border-radius: 3px 3px 0 0;
    background: linear-gradient(#fbfcfe, #dfe8f3);
`;

const QuickArrow = styled.button`
    display: flex;
    align-items: center;
    margin-left: 3px;
    padding-left: 2px;
    border-left: 1px solid #97a3b5;
`;

const Tab = styled.button`
    flex: none;
    display: flex;
    align-items: center;
    gap: 3px;
    width: ${(props) => (props.$active ? 179 : 180)}px;
    height: ${(props) => (props.$active ? 26 : 24)}px;
    padding: 0 6px 0 4px;
    border: 1px solid #97a3b5;
    border-bottom: none;
    border-radius: 3px 3px 0 0;
    background: ${(props) => (props.$active ? "linear-gradient(#cfe1f8, #eef5fd)" : "linear-gradient(#fbfcfe, #e6eef7)")};
`;

const TabText = styled.span`
    flex: 1;
    text-align: left;
    white-space: nowrap;
`;

const NewTab = styled.button`
    flex: none;
    width: 29px;
    height: 24px;
    border: 1px solid #97a3b5;
    border-bottom: none;
    border-radius: 3px 3px 0 0;
    background: linear-gradient(#f4f8fc, #e2ebf6);
`;

const CommandBar = styled.div`
    flex: 1;
    align-self: stretch;
    display: flex;
    align-items: center;
    gap: 10px;
    padding: 0 0 3px 12px;
`;

const CommandButton = styled.button`
    display: flex;
    align-items: center;
    gap: 3px;
    margin-left: 3px;
`;

const PageArea = styled.div`
    flex: 1;
    min-height: 0;
    display: grid;
    grid-template: minmax(0, 1fr) 17px / minmax(0, 1fr) 17px;
    margin: 4px 2px 1px 0;
    border-top: 1px solid #555b64;
    border-left: 1px solid #555b64;
    background: #f0f0f0;
`;

const Page = styled.article`
    overflow: hidden;
    padding: 9px 0 0 11px;
    background: #fff;
`;

const SectionHead = styled.div`
    margin-bottom: 2px;
    border-bottom: 1px solid #a0b0c6;
`;

const SectionTitle = styled.h2`
    width: 300px;
    margin: 0;
    padding-left: 11px;
    background: #a0b3ce;
    color: #34587f;
    font-family: "Open Sans", "Noto Sans", sans-serif;
    font-size: 11px;
    font-weight: bold;
    line-height: 24px;
`;

const Table = styled.table`
    width: 830px;
    table-layout: fixed;
    border-collapse: separate;
    border-spacing: 0;
    font-family: "DejaVu Sans", sans-serif;
    color: #333;
`;

const HeadCell = styled.th`
    height: 23px;
    padding: 0 11px 0 0;
    border-right: 1px solid #8296b5;
    border-bottom: 1px solid #8ea0bc;
    background: #a0b3ce;
    color: #fff;
    font-size: 10px;
    font-weight: bold;
    text-align: right;
    white-space: nowrap;
`;

const Cell = styled.td`
    padding: 6px 9px 6px 10px;
    border-right: 1px solid #dcdcdc;
    border-bottom: 1px solid #dcdcdc;
    background: #f0f0f0;
    box-shadow: inset 0 1px 0 #fff;
    font-size: 11px;
    line-height: 12px;
    text-align: ${(props) => (props.$left ? "left" : "right")};
    vertical-align: ${(props) => (props.$low ? "bottom" : "top")};
    white-space: nowrap;
`;

const TotalCell = styled.td`
    height: 21px;
    padding: 0 8px 0 9px;
    background: #e2e1df;
    font-family: "Open Sans", "Noto Sans", sans-serif;
    font-size: 11px;
    font-weight: bold;
    line-height: 16px;
    text-align: ${(props) => (props.$left ? "left" : "right")};
`;

const VScroll = styled.div`
    display: flex;
    flex-direction: column;
    background: #f0f0f0;
`;

const HScroll = styled.div`
    display: flex;
    background: #ededed;
`;

const ScrollButton = styled.button`
    display: flex;
    align-items: center;
    justify-content: center;
    width: 17px;
    height: 17px;
`;

const VThumb = styled.div`
    display: flex;
    align-items: center;
    justify-content: center;
    width: 15px;
    height: 39px;
    margin: 33px 0 auto 1px;
    border: 1px solid #999;
    border-radius: 2px;
    background: linear-gradient(90deg, #f6f6f6, #dedede 50%, #c4c4c4);
`;

const HThumb = styled.div`
    display: flex;
    align-items: center;
    justify-content: center;
    flex: 0 0 80%;
    height: 15px;
    margin: 1px auto 0 2px;
    border: 1px solid #999;
    border-radius: 2px;
    background: linear-gradient(#f4f4f4, #dfdfdf 50%, #c2c2c2 55%, #d0d0d0);
`;

const StatusBar = styled.footer`
    display: flex;
    align-items: center;
    height: 24px;
    padding: 0 2px;
    border-top: 1px solid #7f858e;
    background: #f1eded;

    > svg {
        align-self: flex-end;
        margin-bottom: 2px;
    }
`;

const StatusText = styled.span`
    flex: 1;
`;

const StatusButton = styled.button`
    display: flex;
    align-items: center;
    gap: ${(props) => (props.$wide ? 1 : 6)}px;
    width: ${(props) => (props.$wide ? 78 : 47)}px;
    font-size: 12px;

    svg:last-child {
        margin-left: ${(props) => (props.$wide ? "auto" : 0)};
        margin-right: ${(props) => (props.$wide ? 11 : 0)}px;
    }
`;

const Taskbar = styled.footer`
    display: flex;
    align-items: stretch;
    height: 40px;
    border-top: 1px solid #33506e;
    background: linear-gradient(90deg, #73859d 0, #7f91a9 5%, #a3bad7 13%, #a3bfdc 74%, #8193aa 79%, #8394aa);
    box-shadow: inset 0 1px 0 #b9cce0;
`;

const StartButton = styled.button`
    flex: none;
    width: 54px;
    padding-left: 8px;
    margin-right: 5px;
`;

const TaskButton = styled.button`
    flex: none;
    display: flex;
    align-items: center;
    justify-content: center;
    width: ${(props) => (props.$stack ? 53 : 59)}px;
    margin-right: ${(props) => (props.$stack ? 9 : 3)}px;
    border: 1px solid ${(props) => (props.$plain ? "transparent" : "#4b6380")};
    border-radius: 3px;
    background: ${(props) => {
        if (props.$plain) return "none";
        if (props.$alert) return "radial-gradient(circle at 50% 30%, #fff0a0, #f5c65c 55%, #ea7f3a)";
        return props.$lit ? "linear-gradient(120deg, #f0f4f9, #bccbdf)" : "linear-gradient(120deg, #c3d2e5, #a9bfda)";
    }};
    box-shadow: ${(props) => {
        if (props.$plain) return "none";
        const edge = "inset 0 0 0 1px rgba(255, 255, 255, 0.6)";
        return props.$stack ? `${edge}, 3px 0 0 #b7c9de, 4px 0 0 #5b728e` : edge;
    }};
`;

const Tray = styled.div`
    display: flex;
    align-items: center;
    margin-left: auto;
    gap: 12px;
    color: #fff;
`;

const Language = styled.span`
    margin-right: 4px;
    padding-bottom: 6px;
`;

const DateTime = styled.time`
    display: flex;
    flex-direction: column;
    width: 68px;
    line-height: 17px;
    text-align: center;
`;

const ShowDesktop = styled.button`
    width: 14px;
    margin-left: 6px;
    border: 1px solid #3f5064;
    background: linear-gradient(120deg, #6d7d91, #a3b1c1 45%, #58687c);
`;
